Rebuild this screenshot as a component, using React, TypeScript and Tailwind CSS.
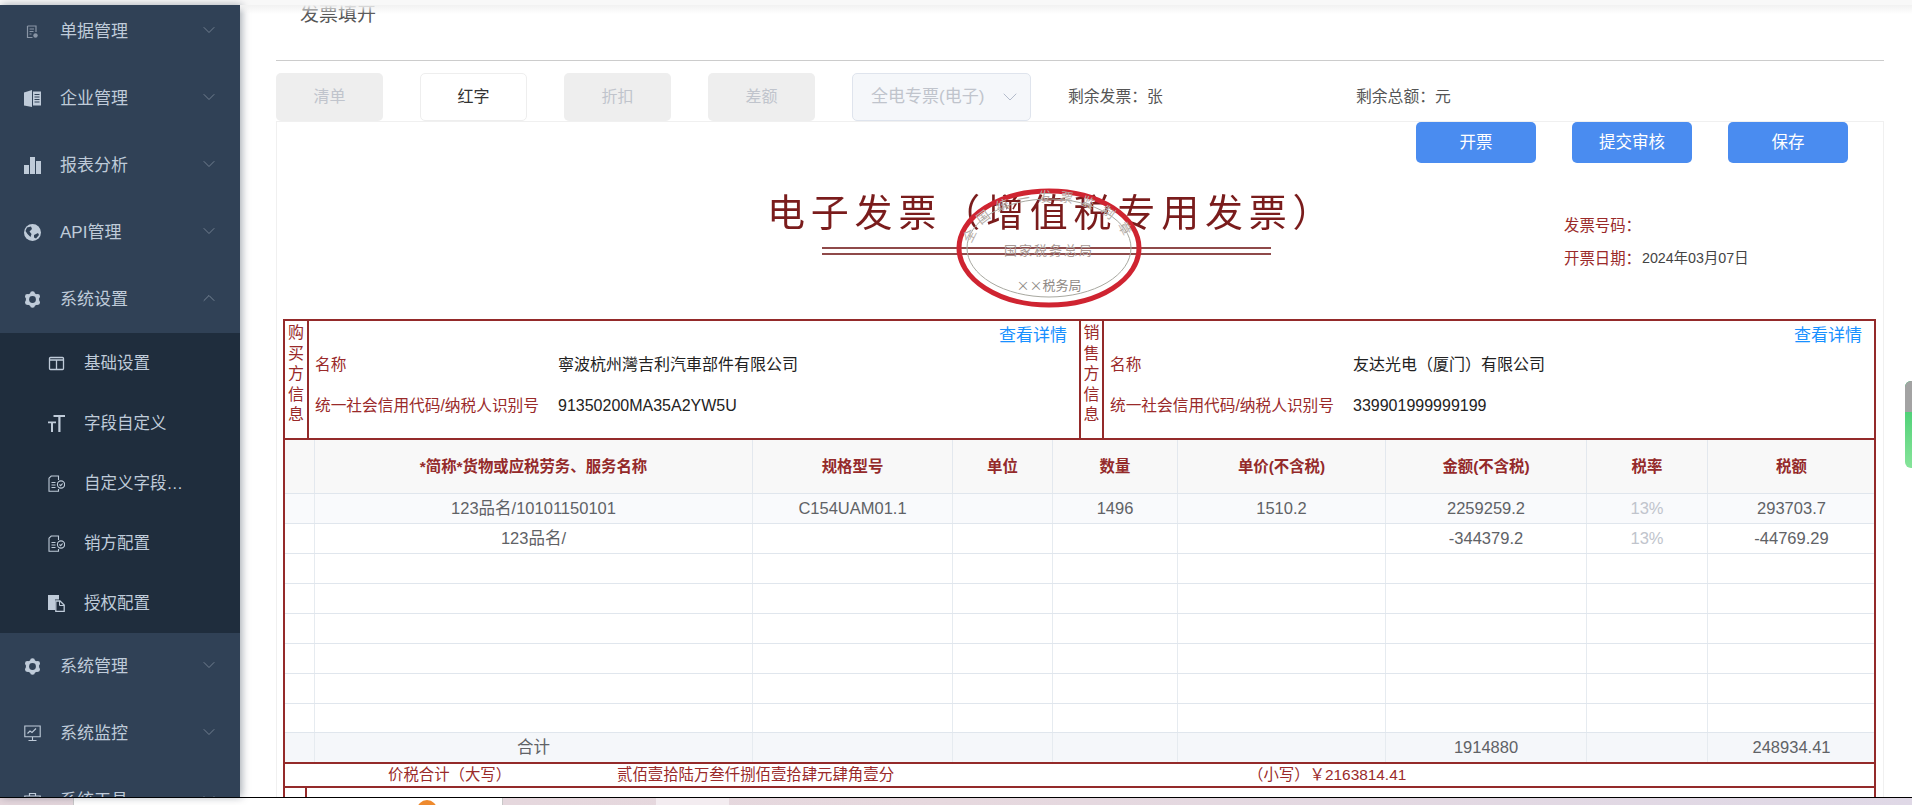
import React from "react";
import { ChevronDown, ChevronUp } from "lucide-react";

function IconDoc() {
  return (
    <svg width="17" height="17" viewBox="0 0 17 17" fill="none" stroke="#8995a5" strokeWidth="1.2">
      <path d="M3.5 3h8.5v6M3.5 3v11.5h5" />
      <path d="M5.5 6h4.5M5.5 8.5h4M5.5 11h2" />
      <circle cx="11.5" cy="12.5" r="2.2" fill="#8995a5" stroke="none" />
    </svg>
  );
}
function IconBook() {
  return (
    <svg width="17" height="17" viewBox="0 0 17 17" fill="#bfcbd9">
      <path d="M0 2.5 8 0v17l-8-1.5z" />
      <path d="M9 1.5h8v14H9zM10.5 4v1h5V4zm0 2.5v1h5v-1zm0 2.5v1h5V9zm0 2.5v1h5v-1z" fillRule="evenodd" />
    </svg>
  );
}
function IconBars() {
  return (
    <svg width="17" height="17" viewBox="0 0 17 17" fill="#bfcbd9">
      <rect x="0" y="8" width="5" height="9" />
      <rect x="6" y="0" width="5" height="17" />
      <rect x="12" y="4" width="5" height="13" />
    </svg>
  );
}
function IconGlobe() {
  return (
    <svg width="17" height="17" viewBox="0 0 17 17">
      <circle cx="8.5" cy="8.5" r="8.5" fill="#bfcbd9" />
      <path d="M3 3.5 7 2.5 8 5 5.5 7.5 7.5 10 6.5 13 3.5 10 1.5 7zM10 11l4-2 1 2-3 3.5-2-1z" fill="#304156" />
    </svg>
  );
}
function IconGear() {
  return (
    <svg width="17" height="17" viewBox="0 0 17 17" fill="#bfcbd9">
      <circle cx="8.5" cy="8.5" r="6.6" />
      <circle cx="8.5" cy="2.6" r="2.4" />
      <circle cx="8.5" cy="14.4" r="2.4" />
      <circle cx="3.4" cy="5.5" r="2.4" />
      <circle cx="13.6" cy="5.5" r="2.4" />
      <circle cx="3.4" cy="11.5" r="2.4" />
      <circle cx="13.6" cy="11.5" r="2.4" />
      <circle cx="8.5" cy="8.5" r="3.4" fill="#304156" />
    </svg>
  );
}
function IconMonitor() {
  return (
    <svg width="17" height="17" viewBox="0 0 17 17" fill="none" stroke="#bfcbd9" strokeWidth="1.1">
      <path d="M.8 1h15.4v10.8H.8z" />
      <path d="M3.5 8.5 6 6l2 1.5L12 3.5M8.5 12v3M4.5 15.5h8" />
    </svg>
  );
}
function IconTool() {
  return (
    <svg width="17" height="17" viewBox="0 0 17 17" fill="none" stroke="#bfcbd9" strokeWidth="1.2">
      <path d="M5.5 4V1.5h6V4M.8 4h15.4v11H.8z" />
    </svg>
  );
}
function IconColumns() {
  return (
    <svg width="17" height="17" viewBox="0 0 17 17" fill="none" stroke="#bfcbd9" strokeWidth="1.3">
      <rect x="1.5" y="2.5" width="14" height="12" rx="1" />
      <path d="M1.5 5h14M8.5 5v9.5" />
    </svg>
  );
}
function IconText() {
  return (
    <svg width="17" height="17" viewBox="0 0 17 17" fill="#bfcbd9">
      <path d="M5.5 0H17v2h-4.5v15h-2.2V2H5.5zM0 6.5h8v1.8H5V17H3V8.3H0z" />
    </svg>
  );
}
function IconCheckDoc() {
  return (
    <svg width="17" height="17" viewBox="0 0 17 17" fill="none" stroke="#bfcbd9" strokeWidth="1.1">
      <path d="M10.5 5V1H3.2L1 3.2V16.2h9.5V14" />
      <path d="M3.5 7.5h4M3.5 10h4M3.5 12.5h4" />
      <circle cx="13" cy="9.5" r="3.6" />
      <path d="m11.5 9.5 1.2 1.2 1.9-2.2" />
    </svg>
  );
}
function IconCopy() {
  return (
    <svg width="17" height="17" viewBox="0 0 17 17">
      <path d="M0 0h11v4.5H7V15H0z" fill="#bfcbd9" />
      <path d="M7.8 6H12l4.2 4v6.3H7.8z" fill="none" stroke="#bfcbd9" strokeWidth="1.3" />
      <path d="M11.5 6v4.5h4.7" fill="none" stroke="#bfcbd9" strokeWidth="1" />
    </svg>
  );
}

function MenuRow({ icon, label, open }: { icon: React.ReactNode; label: string; open?: boolean }) {
  return (
    <div className="flex h-[67px] items-center pl-6 pr-[21px]">
      <span className="flex w-[36px] shrink-0 items-center">{icon}</span>
      <span className="flex-1 text-[17px] text-[#bfcbd9]">{label}</span>
      {open ? (
        <ChevronUp size={20} strokeWidth={1} className="mb-1 text-[#8390a0]" />
      ) : (
        <ChevronDown size={20} strokeWidth={1} className="mb-1 text-[#7d8a9a]" />
      )}
    </div>
  );
}

function SubRow({ icon, label }: { icon: React.ReactNode; label: string }) {
  return (
    <div className="flex h-[60px] items-center pl-12">
      <span className="flex w-[36px] shrink-0 items-center">{icon}</span>
      <span className="w-[100px] truncate text-[16.5px] text-[#bfcbd9]">{label}</span>
    </div>
  );
}

function Sidebar() {
  return (
    <aside className="relative z-10 h-full w-[240px] shrink-0 overflow-hidden bg-[#304156] shadow-[2px_0_8px_rgba(0,21,41,0.35)]">
      <div className="-mt-[7px]">
        <MenuRow icon={<IconDoc />} label="单据管理" />
        <MenuRow icon={<IconBook />} label="企业管理" />
        <MenuRow icon={<IconBars />} label="报表分析" />
        <MenuRow icon={<IconGlobe />} label="API管理" />
        <MenuRow icon={<IconGear />} label="系统设置" open />
        <div className="bg-[#1f2d3d]">
          <SubRow icon={<IconColumns />} label="基础设置" />
          <SubRow icon={<IconText />} label="字段自定义" />
          <SubRow icon={<IconCheckDoc />} label="自定义字段配置" />
          <SubRow icon={<IconCheckDoc />} label="销方配置" />
          <SubRow icon={<IconCopy />} label="授权配置" />
        </div>
        <MenuRow icon={<IconGear />} label="系统管理" />
        <MenuRow icon={<IconMonitor />} label="系统监控" />
        <MenuRow icon={<IconTool />} label="系统工具" />
      </div>
    </aside>
  );
}

function Toolbar() {
  const disabled = "flex h-[48px] w-[107px] items-center justify-center rounded-[5px] bg-[#eeeeee] text-[16px] text-[#c0c4cc]";
  return (
    <div className="flex h-[48px] items-center gap-[37px]">
      <div className={disabled}>清单</div>
      <div className="flex h-[48px] w-[107px] items-center justify-center rounded-[5px] border border-[#eeeeee] bg-white text-[16px] text-[#333]">
        红字
      </div>
      <div className={disabled}>折扣</div>
      <div className={disabled}>差额</div>
      <div className="flex h-[48px] w-[179px] items-center justify-between rounded-[5px] border border-[#dfe4ed] bg-[#f5f7fa] pl-[18px] pr-[8px] text-[17px] text-[#c0c4cc]">
        <span>全电专票(电子)</span>
        <ChevronDown size={24} strokeWidth={1} className="text-[#b4bccc]" />
      </div>
      <div className="flex items-center text-[15.8px] text-[#555]">
        <span className="w-[288px]">剩余发票：张</span>
        <span>剩余总额：元</span>
      </div>
    </div>
  );
}

function Stamp() {
  return (
    <svg
      className="pointer-events-none absolute left-[677px] top-[23px]"
      width="190"
      height="124"
      viewBox="0 0 190 124"
      fill="none"
    >
      <defs>
        <path id="stamp-arc" d="M18 62 A77 47 0 0 1 172 62" />
      </defs>
      <ellipse cx="95" cy="62" rx="82" ry="49" stroke="#a8a8a0" strokeWidth="1" />
      <ellipse cx="95" cy="62" rx="90" ry="57" stroke="#cf2431" strokeWidth="5" />
      <text fontSize="13" fill="#b5ada8" fontFamily="'Noto Sans CJK SC', sans-serif">
        <textPath href="#stamp-arc" startOffset="50%" textAnchor="middle" letterSpacing="8">
          全国统一发票监制章
        </textPath>
      </text>
      <text x="95" y="69" fontSize="13" fill="#a89a96" textAnchor="middle" letterSpacing="2" fontFamily="'Noto Sans CJK SC', sans-serif">
        国家税务总局
      </text>
      <text x="95" y="104" fontSize="13" fill="#908a86" textAnchor="middle" fontFamily="'Noto Sans CJK SC', sans-serif">
        ××税务局
      </text>
    </svg>
  );
}

function InvoiceHead() {
  return (
    <div className="relative flex h-[156px]">
      <div className="ml-[490px] w-[540px] pt-[27px]">
        <div className="whitespace-nowrap text-[38px] leading-[46px] tracking-[5.8px] text-[#7a1c1c] [filter:blur(0.4px)]">
          电子发票（增值税专用发票）
        </div>
        <div className="ml-[55px] mt-[11px] h-[8px] w-[449px] border-y-2 border-[#8f4a4a]" />
      </div>
      <div className="ml-[257px] pt-[51px] text-[15.4px] text-[#9a2a2a]">
        <div className="h-[33px] leading-[24px]">发票号码：</div>
        <div className="flex h-[24px] items-center whitespace-nowrap">
          开票日期：<span className="ml-[1px] text-[14.3px] text-[#444]">2024年03月07日</span>
        </div>
      </div>
      <Stamp />
    </div>
  );
}

function PartyBlock({
  side,
  name,
  code,
  labelW,
  valueX,
  grow,
}: {
  side: string;
  name: string;
  code: string;
  labelW: string;
  valueX: string;
  grow: string;
}) {
  return (
    <div className={`flex h-full ${grow}`}>
      <div className={`flex ${labelW} shrink-0 flex-col items-center pt-[2px] text-[16px] leading-[20.6px] text-[#9a2a2a]`}>
        {side.split("").map((c, i) => (
          <span key={i}>{c}</span>
        ))}
      </div>
      <div className="relative flex-1 border-l-2 border-[#942a2a]">
        <div className="flex justify-end pr-[12px] pt-[3px] text-[17px] leading-[24px] text-[#1890ff]">查看详情</div>
        <div className="mt-[2px] flex h-[30px] items-center pl-[6px]">
          <span className={`${valueX} shrink-0 text-[15.7px] text-[#9a2a2a]`}>名称</span>
          <span className="text-[16px] text-[#222]">{name}</span>
        </div>
        <div className="mt-[11px] flex h-[30px] items-center pl-[6px]">
          <span className={`${valueX} shrink-0 whitespace-nowrap text-[15.7px] text-[#9a2a2a]`}>统一社会信用代码/纳税人识别号</span>
          <span className="text-[16px] text-[#222]">{code}</span>
        </div>
      </div>
    </div>
  );
}

const colW = ["w-[30px]", "w-[438px]", "w-[200px]", "w-[100px]", "w-[125px]", "w-[208px]", "w-[201px]", "w-[121px]", "w-[167px]"];

const headers = ["", "*简称*货物或应税劳务、服务名称", "规格型号", "单位", "数量", "单价(不含税)", "金额(不含税)", "税率", "税额"];

const rows: string[][] = [
  ["", "123品名/10101150101", "C154UAM01.1", "", "1496", "1510.2", "2259259.2", "13%", "293703.7"],
  ["", "123品名/", "", "", "", "", "-344379.2", "13%", "-44769.29"],
  ["", "", "", "", "", "", "", "", ""],
  ["", "", "", "", "", "", "", "", ""],
  ["", "", "", "", "", "", "", "", ""],
  ["", "", "", "", "", "", "", "", ""],
  ["", "", "", "", "", "", "", "", ""],
  ["", "", "", "", "", "", "", "", ""],
];

function GoodsTable() {
  return (
    <div className="border-y-2 border-[#942a2a]">
      <div className="flex h-[53px] bg-[#f8f8f8]">
        {headers.map((h, i) => (
          <div
            key={i}
            className={`${colW[i]} flex shrink-0 items-center justify-center border-r border-[#e3e8ee] text-[15.4px] font-bold text-[#942a2a] last:border-r-0`}
          >
            {h}
          </div>
        ))}
      </div>
      {rows.map((r, ri) => (
        <div
          key={ri}
          className={`flex border-t border-[#e0e6ed] ${ri === 7 ? "h-[29px]" : "h-[30px]"} ${ri === 0 ? "bg-[#f9fafc]" : "bg-white"}`}
        >
          {r.map((c, i) => (
            <div
              key={i}
              className={`${colW[i]} flex shrink-0 items-center justify-center border-r border-[#e6ebf0] text-[16.5px] last:border-r-0 ${
                i === 7 ? "text-[#c0c4cc]" : "text-[#606266]"
              }`}
            >
              {c}
            </div>
          ))}
        </div>
      ))}
      <div className="flex h-[30px] border-t border-[#e0e6ed] bg-[#f5f7fa]">
        {["", "合计", "", "", "", "", "1914880", "", "248934.41"].map((c, i) => (
          <div
            key={i}
            className={`${colW[i]} flex shrink-0 items-center justify-center border-r border-[#e6ebf0] text-[16.5px] text-[#606266] last:border-r-0`}
          >
            {c}
          </div>
        ))}
      </div>
    </div>
  );
}

function InvoiceTable() {
  return (
    <div className="ml-[6px] w-[1593px] border-x-2 border-t-2 border-[#942a2a]">
      <div className="flex h-[117px]">
        <PartyBlock
          side="购买方信息"
          name="寧波杭州灣吉利汽車部件有限公司"
          code="91350200MA35A2YW5U"
          labelW="w-[22px]"
          valueX="w-[243px]"
          grow="w-[794px]"
        />
        <div className="w-[2px] bg-[#942a2a]" />
        <PartyBlock
          side="销售方信息"
          name="友达光电（厦门）有限公司"
          code="339901999999199"
          labelW="w-[21px]"
          valueX="w-[243px]"
          grow="flex-1"
        />
      </div>
      <GoodsTable />
      <div className="flex h-[24px] items-center border-b-2 border-[#942a2a] text-[15.4px] leading-[22px] text-[#9a2a2a]">
        <span className="ml-[103px] w-[229px] whitespace-nowrap">价税合计（大写）</span>
        <span className="w-[631px] whitespace-nowrap">贰佰壹拾陆万叁仟捌佰壹拾肆元肆角壹分</span>
        <span className="whitespace-nowrap">（小写）￥2163814.41</span>
      </div>
      <div className="flex h-[20px]">
        <div className="w-[22px] border-r-2 border-[#942a2a]" />
      </div>
    </div>
  );
}

function Main() {
  return (
    <main className="relative h-full flex-1 overflow-hidden bg-white">
      <div className="pointer-events-none absolute inset-x-0 top-0 z-10 h-[9px] bg-gradient-to-b from-[#f1f1f1] to-transparent" />
      <div className="ml-[36px] w-[1608px]">
        <div className="h-[56px] border-b border-[#cccccc] pl-[24px] text-[19px] leading-[30px] text-[#555]">
          <span className="relative -top-[5px]">发票填开</span>
        </div>
        <div className="mt-[12px]">
          <Toolbar />
        </div>
        <div className="h-[700px] border-x border-t border-[#f0f0f0]">
          <div className="flex justify-end gap-[36px] pr-[35px]">
            {["开票", "提交审核", "保存"].map((t) => (
              <button key={t} className="h-[41px] w-[120px] rounded-[5px] bg-[#4a8cf0] text-[16.5px] text-white">
                {t}
              </button>
            ))}
          </div>
          <InvoiceHead />
          <InvoiceTable />
        </div>
      </div>
      <div className="absolute right-0 top-[376px] h-[87px] w-[7px] overflow-hidden rounded-l-[6px] bg-gradient-to-b from-[#1fc765] to-[#86e49a]">
        <div className="h-[31px] bg-[#a3a3a3]" />
      </div>
    </main>
  );
}

export default function App() {
  return (
    <div className="flex h-[805px] w-[1912px] flex-col overflow-hidden bg-white font-['Liberation_Sans','Noto_Sans_CJK_SC',sans-serif]">
      <div className="h-[5px] shrink-0 bg-[#f8f8f8]" />
      <div className="flex h-[792px] shrink-0">
        <Sidebar />
        <Main />
      </div>
      <div className="flex h-[8px] shrink-0 border-t border-black bg-gradient-to-r from-[#e4d6dc] via-[#e6d8de] to-[#dfd8e6]">
        <div className="ml-[73px] h-full w-[430px] overflow-hidden border-x border-[#c8c8c8] bg-white">
          <div className="ml-[343px] mt-[2px] h-[20px] w-[20px] rounded-full bg-[#ee8a2e]" />
        </div>
        <div className="ml-[153px] h-full w-[73px] bg-[#f3ecf0]" />
      </div>
    </div>
  );
}
